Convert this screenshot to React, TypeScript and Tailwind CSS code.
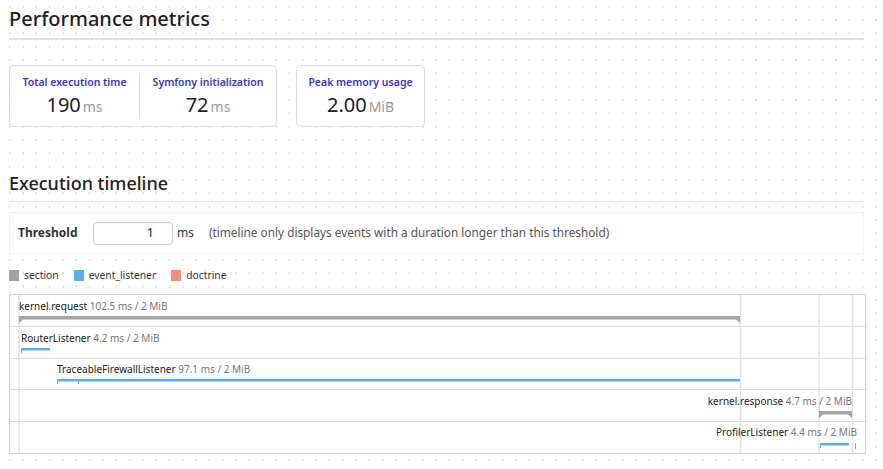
import React from "react"

const font = { fontFamily: '"Segoe UI", "Noto Sans", sans-serif' }

interface Metric {
  label: string
  value: string
  unit: string
  width: string
}

function MetricBlock({ m, divider }: { m: Metric; divider?: boolean }) {
  return (
    <div className={`flex items-center ${m.width}`}>
      {divider && <div className="h-[44px] w-px bg-[#dddddd]" />}
      <div className="flex flex-1 flex-col items-center">
        <div className="text-[10.5px] font-semibold leading-[16px] text-[#3434cf]">{m.label}</div>
        <div className="mt-[3px] flex items-baseline leading-[24px]">
          <span className="text-[20px] text-[#222]">{m.value}</span>
          <span className="ml-[2px] text-[14px] text-[#999]">{m.unit}</span>
        </div>
      </div>
    </div>
  )
}

function Timeline() {
  const grid = "#e3e3e3"
  const blue = "#58aef6"
  const gray = "#a3a3a3"
  return (
    <div className="w-[857px] h-[160px] bg-white">
      <svg width="857" height="160" className="block" style={{ fontFamily: '"Segoe UI", "Noto Sans", sans-serif' }}>
        <rect x="0.5" y="0.5" width="856" height="159" fill="white" stroke="#d2d2d2" />
        {[32, 64, 95, 127].map((y) => (
          <line key={y} x1="1" x2="856" y1={y + 0.5} y2={y + 0.5} stroke="#dcdcdc" />
        ))}
        {[10, 731.5, 810, 843.5].map((x) => (
          <line key={x} x1={x} x2={x} y1="1" y2="159" stroke={grid} strokeWidth="1.5" />
        ))}

        {/* kernel.request */}
        <text x="10" y="16" fontSize="10" fill="#222">
          kernel.request <tspan fill="#777">102.5 ms / 2 MiB</tspan>
        </text>
        <polygon points="10,22 731,22 731,29 727,25.5 14,25.5 10,29" fill={gray} />

        {/* RouterListener */}
        <text x="12" y="48" fontSize="10" fill="#222">
          RouterListener <tspan fill="#777">4.2 ms / 2 MiB</tspan>
        </text>
        <rect x="12" y="54" width="29" height="2.5" fill={blue} />
        <rect x="12" y="54" width="1" height="5" fill={blue} />

        {/* TraceableFirewallListener */}
        <text x="48" y="79" fontSize="10" fill="#222">
          TraceableFirewallListener <tspan fill="#777">97.1 ms / 2 MiB</tspan>
        </text>
        <rect x="48" y="85" width="683" height="2.5" fill={blue} />
        <rect x="48" y="85" width="1" height="5" fill={blue} />
        <rect x="69" y="85" width="1" height="5" fill={blue} />

        {/* kernel.response */}
        <text x="843" y="111" fontSize="10" fill="#222" textAnchor="end">
          kernel.response <tspan fill="#777">4.7 ms / 2 MiB</tspan>
        </text>
        <polygon points="810,117 843,117 843,124 839,120.5 814,120.5 810,124" fill={gray} />

        {/* ProfilerListener */}
        <text x="848" y="142" fontSize="10" fill="#222" textAnchor="end">
          ProfilerListener <tspan fill="#777">4.4 ms / 2 MiB</tspan>
        </text>
        <rect x="811" y="149" width="29" height="2.5" fill={blue} />
        <rect x="811" y="149" width="1" height="5" fill={blue} />
        <rect x="846" y="149" width="1" height="6" fill={blue} />
      </svg>
    </div>
  )
}

export default function App() {
  const metrics: Metric[] = [
    { label: "Total execution time", value: "190", unit: "ms", width: "w-[129px]" },
    { label: "Symfony initialization", value: "72", unit: "ms", width: "w-[137px]" },
  ]
  const memory: Metric = { label: "Peak memory usage", value: "2.00", unit: "MiB", width: "w-[127px]" }

  return (
    <div
      className="min-h-[469px] w-[883px] bg-white pl-[9px] pt-[6px] text-[#222]"
      style={{
        ...font,
        backgroundImage: "radial-gradient(circle, #dcdcdc 0.9px, transparent 1.1px)",
        backgroundSize: "13.33px 13.33px",
        backgroundPosition: "3px 0px",
      }}
    >
      <div className="w-[855px]">
        <h2 className="border-b-2 border-[#e2e2e2] pb-[6px] text-[20px] font-medium leading-[26px] text-[#222]">
          Performance metrics
        </h2>

        <div className="mt-[25px] flex gap-[19px]">
          <div className="flex h-[62px] rounded-[5px] border border-[#dadada] bg-white">
            <MetricBlock m={metrics[0]} />
            <MetricBlock m={metrics[1]} divider />
          </div>
          <div className="flex h-[62px] rounded-[5px] border border-[#dadada] bg-white">
            <MetricBlock m={memory} />
          </div>
        </div>

        <h2 className="mt-[44px] border-b border-[#e2e2e2] pb-[6px] text-[18px] font-medium leading-[24px] text-[#222]">
          Execution timeline
        </h2>

        <div className="mt-[10px] flex h-[42px] items-center border border-[#f0f0f0] bg-white pl-[8px] text-[12px]">
          <span className="w-[75px] font-bold text-[#333]">Threshold</span>
          <div className="flex h-[23px] w-[80px] items-center justify-end rounded-[4px] border border-[#cccccc] bg-white pr-[18px] text-[12.5px] text-[#222]">
            1
          </div>
          <span className="ml-[4px] text-[#333]">ms</span>
          <span className="ml-[15px] text-[11.8px] text-[#555]">
            (timeline only displays events with a duration longer than this threshold)
          </span>
        </div>

        <div className="mt-[13px] flex items-center text-[10.3px] leading-[16px] text-[#333]">
          <span className="h-[11px] w-[10px] bg-[#a2a2a2]" />
          <span className="ml-[5px]">section</span>
          <span className="ml-[15px] h-[11px] w-[10px] bg-[#58aef6]" />
          <span className="ml-[5px]">event_listener</span>
          <span className="ml-[15px] h-[11px] w-[10px] bg-[#fb8a74]" />
          <span className="ml-[5px]">doctrine</span>
        </div>

        <div className="mt-[11px]">
          <Timeline />
        </div>
      </div>
    </div>
  )
}
